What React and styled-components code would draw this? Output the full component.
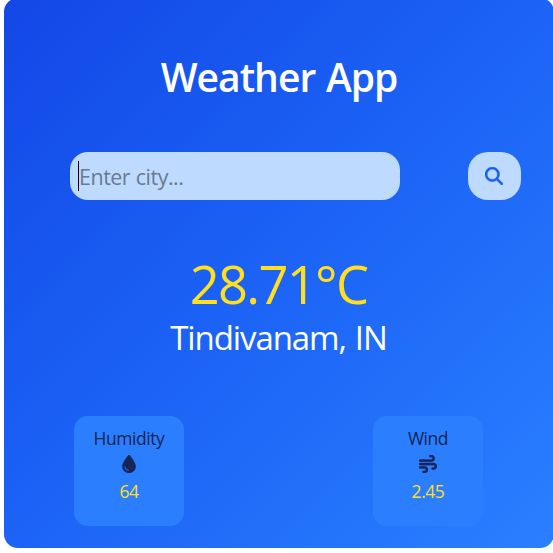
import React from "react";
import styled, { createGlobalStyle } from "styled-components";
import { FaMagnifyingGlass, FaDroplet, FaWind } from "react-icons/fa6";

const GlobalStyle = createGlobalStyle`
  * { box-sizing: border-box; }
  html, body { margin: 0; overflow: hidden; background: #fff; }
  body { font-family: "Open Sans", "Noto Sans", sans-serif; }
`;

const Page = styled.main`
  height: 553px;
  display: flow-root;
  overflow: hidden;
`;

const Card = styled.section`
  width: 550px;
  height: 550px;
  margin: -2px 0 0 4px;
  border-radius: 14px;
  background: linear-gradient(to bottom right in oklab, #1447e6, #1c63f6 50%, #2b7fff);
  display: flex;
  flex-direction: column;
`;

const Title = styled.h1`
  margin: 49px 0 0;
  height: 60px;
  line-height: 60px;
  font-size: 39px;
  font-weight: 600;
  letter-spacing: -0.98px;
  word-spacing: 1.5px;
  color: #fff;
  text-align: center;
`;

const SearchRow = styled.div`
  display: flex;
  justify-content: space-between;
  height: 48px;
  margin: 45px 33px 0 66px;
`;

const Field = styled.div`
  display: flex;
  align-items: center;
  width: 330px;
  padding: 1px 8px 0;
  border-radius: 18px;
  background: #bedbff;
`;

const Caret = styled.span`
  width: 1px;
  height: 30px;
  margin-top: -1px;
  background: #000;
`;

const Placeholder = styled.span`
  font-size: 21.5px;
  letter-spacing: -0.5px;
  word-spacing: 0.5px;
  color: #6a7a90;
  white-space: nowrap;
`;

const SearchButton = styled.button`
  display: flex;
  align-items: center;
  justify-content: center;
  width: 53px;
  padding: 0 1px 0 0;
  border: 0;
  border-radius: 20px;
  background: #bedbff;
  color: #155dfc;

  svg {
    width: 18px;
    height: 18px;
    stroke: currentColor;
    stroke-width: 8px;
  }
`;

const Temperature = styled.div`
  margin-top: 55px;
  height: 58px;
  line-height: 58px;
  padding-right: 1px;
  font-size: 52.5px;
  letter-spacing: -1.7px;
  color: #ffdf20;
  text-align: center;
`;

const City = styled.div`
  height: 44px;
  margin-top: 3px;
  padding-right: 1px;
  line-height: 44px;
  font-size: 33px;
  letter-spacing: -1.1px;
  word-spacing: 1.5px;
  color: #fff;
  text-align: center;
`;

const Stats = styled.div`
  display: flex;
  justify-content: space-between;
  margin: 56px 71px 0 70px;
`;

const Stat = styled.div`
  display: flex;
  flex-direction: column;
  align-items: center;
  width: 110px;
  height: 110px;
  padding-top: 8px;
  border-radius: 14px;
  background: #2b7fff;
  color: #162456;
  font-size: 17.5px;
  line-height: 28px;

  svg {
    width: 18px;
    height: 18px;
    margin: 3px 0 4px;
    stroke: currentColor;
    stroke-width: 8px;
  }
`;

const StatLabel = styled.span`
  letter-spacing: -0.45px;
`;

const StatValue = styled.span`
  color: #ffdf20;
  letter-spacing: -0.45px;
`;

export default function App() {
  return (
    <Page>
      <GlobalStyle />
      <Card>
        <Title>Weather App</Title>
        <SearchRow>
          <Field>
            <Caret />
            <Placeholder>Enter city...</Placeholder>
          </Field>
          <SearchButton aria-label="Search">
            <FaMagnifyingGlass />
          </SearchButton>
        </SearchRow>
        <Temperature>28.71°C</Temperature>
        <City>Tindivanam, IN</City>
        <Stats>
          <Stat>
            <StatLabel>Humidity</StatLabel>
            <FaDroplet />
            <StatValue>64</StatValue>
          </Stat>
          <Stat>
            <StatLabel>Wind</StatLabel>
            <FaWind />
            <StatValue>2.45</StatValue>
          </Stat>
        </Stats>
      </Card>
    </Page>
  );
}
